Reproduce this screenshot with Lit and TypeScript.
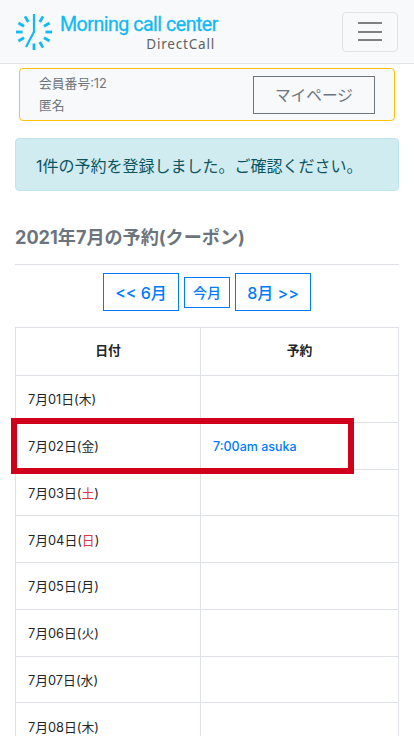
import { LitElement, html, css, svg } from "lit";
import { customElement } from "lit/decorators.js";

const rows: [string, string, boolean][] = [
  ["7月01日(", "木", false],
  ["7月02日(", "金", false],
  ["7月03日(", "土", true],
  ["7月04日(", "日", true],
  ["7月05日(", "月", false],
  ["7月06日(", "火", false],
  ["7月07日(", "水", false],
  ["7月08日(", "木", false],
];

const ticks = [30, 60, 90, 120, 150, 180, 240, 270, 300, 330].map((a) => {
  const r = (a * Math.PI) / 180;
  const x1 = 18 + Math.sin(r) * 11.5;
  const y1 = 18 - Math.cos(r) * 11.5;
  const x2 = 18 + Math.sin(r) * 18;
  const y2 = 18 - Math.cos(r) * 18;
  return svg`<line x1=${x1} y1=${y1} x2=${x2} y2=${y2}></line>`;
});

@customElement("app-root")
export class AppRoot extends LitElement {
  static styles = css`
    :host {
      display: block;
      height: 736px;
      overflow: hidden;
      position: relative;
      background: #fff;
      font-family: "Inter", "Liberation Sans", "Noto Sans CJK JP", sans-serif;
      color: #212529;
    }
    .nav {
      height: 64px;
      box-sizing: border-box;
      background: #f8f9fa;
      border-bottom: 1px solid #dee2e6;
      display: flex;
      align-items: center;
      justify-content: space-between;
      padding: 0 16px;
    }
    .brand {
      display: flex;
      align-items: center;
      gap: 8px;
    }
    .logo {
      width: 36px;
      height: 36px;
      display: block;
    }
    .logo line {
      stroke: #12b9f5;
      stroke-width: 2.8;
      fill: none;
    }
    .logo line.hand {
      stroke-width: 2.2;
    }
    .words {
      display: flex;
      flex-direction: column;
      align-items: flex-end;
      margin-top: 1px;
      width: 157px;
    }
    .title {
      font-family: "Roboto", sans-serif;
      font-size: 19.6px;
      font-weight: 400;
      line-height: 24px;
      letter-spacing: -0.5px;
      color: #12b9f5;
      white-space: nowrap;
      align-self: flex-start;
      -webkit-text-stroke: 0.3px #12b9f5;
    }
    .sub {
      font-family: "Noto Sans", sans-serif;
      font-size: 13.5px;
      line-height: 14px;
      letter-spacing: 0.8px;
      color: #5f6163;
      margin-right: 2px;
    }
    .toggler {
      width: 56px;
      height: 40px;
      box-sizing: border-box;
      border: 1px solid #dfe1e3;
      border-radius: 4px;
      display: flex;
      flex-direction: column;
      align-items: center;
      justify-content: center;
      gap: 6.5px;
    }
    .toggler span {
      width: 24px;
      height: 2px;
      background: #808080;
    }
    .info {
      margin: 4px 19px 0;
      height: 53px;
      box-sizing: border-box;
      background: #f8f9fa;
      border: 1px solid #ffc107;
      border-radius: 4px;
      display: flex;
      align-items: center;
      justify-content: space-between;
      padding: 0 19px;
    }
    .member {
      font-size: 12.8px;
      line-height: 22px;
      color: #6c757d;
    }
    .mypage {
      width: 122px;
      height: 38px;
      box-sizing: border-box;
      border: 1px solid #6c757d;
      color: #6c757d;
      font-size: 15.7px;
      display: flex;
      align-items: center;
      justify-content: center;
    }
    .alert {
      margin: 17px 15px 0;
      height: 53px;
      box-sizing: border-box;
      background: #d1ecf1;
      border: 1px solid #bee5eb;
      border-radius: 4px;
      color: #0c5460;
      font-size: 16px;
      display: flex;
      align-items: center;
      padding: 0 20px;
      white-space: nowrap;
    }
    h2 {
      margin: 33px 15px 0;
      font-size: 18.1px;
      line-height: 26px;
      font-weight: 700;
      color: #6c757d;
    }
    hr {
      margin: 14px 15px 0;
      border: 0;
      border-top: 1px solid #dee2e6;
    }
    .pager {
      display: flex;
      justify-content: center;
      align-items: center;
      gap: 5px;
      margin-top: 8px;
    }
    .pager a {
      box-sizing: border-box;
      border: 1px solid #007bff;
      color: #007bff;
      font-size: 16px;
      font-weight: 500;
      height: 38px;
      width: 76px;
      display: flex;
      align-items: center;
      justify-content: center;
      white-space: nowrap;
    }
    .pager a.sm {
      font-size: 14px;
      height: 31px;
      width: 46px;
    }
    table {
      margin: 16px 15px 0;
      width: 384px;
      border-collapse: collapse;
      table-layout: fixed;
      font-size: 12.8px;
    }
    th,
    td {
      border: 1px solid #dee2e6;
      padding: 0 12px;
      height: 46.75px;
      box-sizing: border-box;
      text-align: left;
    }
    th {
      height: 48px;
      padding-bottom: 4px;
      text-align: center;
      font-weight: 700;
    }
    .c1 {
      width: 185px;
    }
    .red {
      color: #dc3545;
    }
    .link {
      color: #007bff;
      font-size: 12.5px;
      font-weight: 500;
      position: relative;
      top: 1px;
    }
    .mark {
      position: absolute;
      left: 11px;
      top: 418px;
      width: 343px;
      height: 56px;
      box-sizing: border-box;
      border: 6px solid #d0021b;
    }
  `;

  render() {
    return html`
      <nav class="nav">
        <div class="brand">
          <svg class="logo" viewBox="0 0 36 36">
            ${ticks}
            <line class="hand" x1="18" y1="0" x2="18" y2="18"></line>
            <line class="hand" x1="18.4" y1="17" x2="10" y2="33"></line>
          </svg>
          <div class="words">
            <div class="title">Morning call center</div>
            <div class="sub">DirectCall</div>
          </div>
        </div>
        <div class="toggler"><span></span><span></span><span></span></div>
      </nav>
      <section class="info">
        <div class="member">
          <div>会員番号:12</div>
          <div>匿名</div>
        </div>
        <a class="mypage">マイページ</a>
      </section>
      <div class="alert">1件の予約を登録しました。ご確認ください。</div>
      <h2>2021年7月の予約(クーポン)</h2>
      <hr />
      <div class="pager">
        <a>&lt;&lt; 6月</a>
        <a class="sm">今月</a>
        <a>8月 &gt;&gt;</a>
      </div>
      <table>
        <thead>
          <tr><th class="c1">日付</th><th>予約</th></tr>
        </thead>
        <tbody>
          ${rows.map(
            ([d, w, red], i) => html`<tr>
              <td>${d}<span class=${red ? "red" : ""}>${w}</span>)</td>
              <td>${i === 1 ? html`<span class="link">7:00am asuka</span>` : ""}</td>
            </tr>`
          )}
        </tbody>
      </table>
      <div class="mark"></div>
    `;
  }
}
